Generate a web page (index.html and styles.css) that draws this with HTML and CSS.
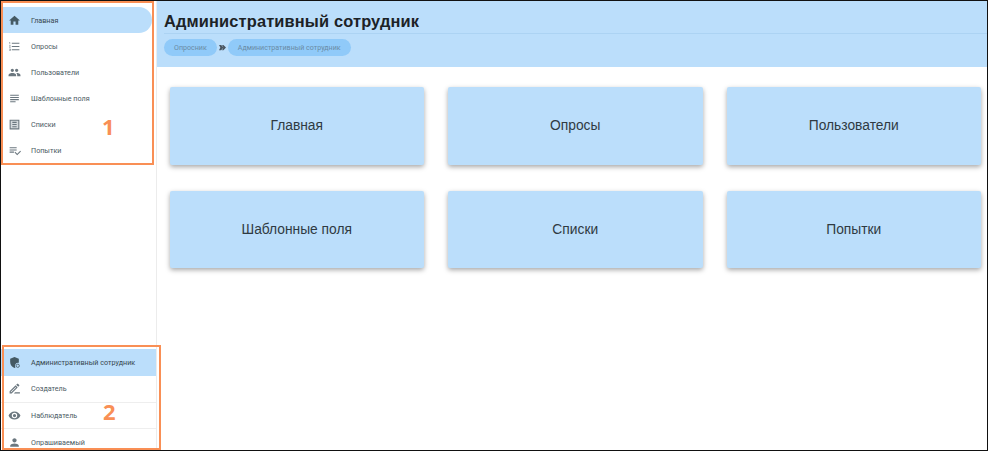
FILE: index.html
```html
<!DOCTYPE html>
<html lang="ru">
<head>
<meta charset="utf-8">
<title>Административный сотрудник</title>
<link rel="stylesheet" href="styles.css">
</head>
<body>
<div class="frame">
  <aside class="sidebar">
    <nav class="menu">
      <a class="item active"><svg class="icon" viewBox="0 0 24 24"><path d="M10 20v-6h4v6h5v-8h3L12 3 2 12h3v8z"/></svg><span>Главная</span></a>
      <a class="item"><svg class="icon" viewBox="0 0 24 24"><path d="M2 17h2v.5H3v1h1v.5H2v1h3v-4H2zm1-9h1V4H2v1h1zm-1 3h1.8L2 13.1v.9h3v-1H3.2L5 10.9V10H2zm5-6v2h14V5zm0 14h14v-2H7zm0-6h14v-2H7z"/></svg><span>Опросы</span></a>
      <a class="item"><svg class="icon" viewBox="0 0 24 24"><path d="M16 11c1.66 0 2.99-1.34 2.99-3S17.66 5 16 5s-3 1.34-3 3 1.34 3 3 3zm-8 0c1.66 0 2.99-1.34 2.99-3S9.66 5 8 5 5 6.34 5 8s1.34 3 3 3zm0 2c-2.33 0-7 1.17-7 3.5V19h14v-2.5C15 14.170 10.33 13 8 13zm8 0c-.29 0-.62.02-.97.05C16.19 13.89 17 15.02 17 16.5V19h6v-2.5c0-2.33-4.67-3.5-7-3.5z"/></svg><span>Пользователи</span></a>
      <a class="item"><svg class="icon" viewBox="0 0 24 24"><path d="M14 17H4v2h10zm6-8H4v2h16zM4 15h16v-2H4zM4 5v2h16V5z"/></svg><span>Шаблонные поля</span></a>
      <a class="item"><svg class="icon" viewBox="0 0 24 24"><path class="tint" d="M4 4h16v16H4z"/><path d="M3 3v18h18V3zm2 2h14v14H5zm3 2v2h8V7zm0 4v2h8v-2zm0 4v2h8v-2z" fill-rule="evenodd"/></svg><span>Списки</span></a>
      <a class="item"><svg class="icon" viewBox="0 0 24 24"><path d="M3 6h13v2H3zm0 4h13v2H3zm0 4h8v2H3zm19.6-1.6L17 18l-3.600-3.600-1.400 1.400 5 5 7-7z"/></svg><span>Попытки</span></a>
    </nav>
    <nav class="roles">
      <a class="role active"><svg class="icon" viewBox="0 0 24 24"><path d="M12 2 4 5v6c0 5 3.400 9.700 8 11 .6-.2 1.200-.4 1.700-.7A6 6 0 0 1 20 12.400V5z"/><circle class="ring" cx="18" cy="18" r="3"/></svg><span>Административный сотрудник</span></a>
      <a class="role"><svg class="icon" viewBox="0 0 24 24"><path d="M14.060 9.020l.92.92L5.920 19H5v-.92zM17.660 3c-.25 0-.51.1-.7.29l-1.830 1.830 3.750 3.750 1.830-1.830a1 1 0 0 0 0-1.410l-2.340-2.340c-.2-.2-.45-.29-.71-.29zm-3.600 3.190L3 17.250V21h3.750L17.810 9.940zM13 19h9v2h-11z"/></svg><span>Создатель</span></a>
      <a class="role"><svg class="icon" viewBox="0 0 24 24"><path d="M12 4.500C7 4.500 2.730 7.610 1 12c1.730 4.390 6 7.500 11 7.500s9.270-3.110 11-7.500c-1.730-4.390-6-7.500-11-7.500zM12 17a5 5 0 1 1 0-10 5 5 0 0 1 0 10zm0-8a3 3 0 1 0 0 6 3 3 0 0 0 0-6z"/></svg><span>Наблюдатель</span></a>
      <a class="role"><svg class="icon" viewBox="0 0 24 24"><path d="M12 12c2.210 0 4-1.790 4-4s-1.790-4-4-4-4 1.790-4 4 1.790 4 4 4zm0 2c-2.670 0-8 1.340-8 4v2h16v-2c0-2.660-5.330-4-8-4z"/></svg><span>Опрашиваемый</span></a>
    </nav>
  </aside>
  <main class="main">
    <header class="header">
      <h1 class="title">Административный сотрудник</h1>
      <div class="crumbs">
        <span class="chip">Опросник</span>
        <svg class="sep" viewBox="0 0 8 8"><path d="M0 1h2.500L5 4 2.500 7H0l1.500-3zM3.500 1h1.500L8 4 5 7H3.500L5 4z"/></svg>
        <span class="chip">Административный сотрудник</span>
      </div>
    </header>
    <section class="cards">
      <div class="card">Главная</div>
      <div class="card">Опросы</div>
      <div class="card">Пользователи</div>
      <div class="card">Шаблонные поля</div>
      <div class="card">Списки</div>
      <div class="card">Попытки</div>
    </section>
  </main>
  <div class="note note-one"><b>1</b></div>
  <div class="note note-two"><b>2</b></div>
</div>
</body>
</html>
```
FILE: styles.css
```css
* { box-sizing: border-box; }
html, body { margin: 0; padding: 0; background: #fff; }
body { width: 988px; height: 452px; overflow: hidden; font-family: Roboto, "Liberation Sans", sans-serif; }
.frame {
  position: relative;
  display: flex;
  width: 988px;
  height: 451px;
  border: 1px solid #111;
  overflow: hidden;
}
.sidebar {
  width: 156px;
  flex: none;
  display: flex;
  flex-direction: column;
  justify-content: space-between;
  border-right: 1px solid #ececec;
  padding-top: 6px;
  color: #4a5a63;
  font-size: 7.200px;
}
.menu { display: flex; flex-direction: column; }
.item, .role {
  display: flex;
  flex: none;
  align-items: center;
  gap: 10px;
  height: 26px;
  padding-left: 7px;
}
.item.active {
  background: #bbdefb;
  border-radius: 0 13px 13px 0;
  margin-right: 4px;
  color: #37474f;
}
.roles { display: flex; flex-direction: column; height: 101px; }
.role { border-bottom: 1px solid #eee; height: 26.500px; }
.role:last-child { border-bottom: 0; }
.role.active { background: #bbdefb; color: #37474f; height: 27px; border-bottom: 0; }
.icon { width: 13px; height: 13px; flex: none; fill: #6b777f; }
.item.active .icon, .role.active .icon { fill: #455a64; }
.tint { fill: #d5dadd; }
.ring { fill: none; stroke: #455a64; stroke-width: 1.500; }
.main { flex: 1; min-width: 0; display: flex; flex-direction: column; }
.header { height: 66px; background: #bbdefb; padding: 0 0 0 7px; }
.title {
  margin: 0;
  height: 33px;
  border-bottom: 1px solid #acd3f3;
  font-family: "Liberation Sans", Arial, sans-serif;
  font-size: 16.400px;
  font-weight: 700;
  line-height: 41px;
  color: #1c2226;
  letter-spacing: 0.150px;
}
.crumbs { display: flex; align-items: center; gap: 2px; margin-top: 5px; }
.chip {
  height: 17px;
  padding: 0 10px;
  border-radius: 9px;
  background: #90caf9;
  color: #6a8aa5;
  font-size: 7.100px;
  line-height: 17px;
}
.sep { width: 7px; height: 7px; fill: #4a5560; }
.cards {
  display: grid;
  grid-template-columns: repeat(3, 254.500px);
  grid-auto-rows: 77.500px;
  column-gap: 24px;
  row-gap: 26px;
  padding: 20px 0 0 12.500px;
}
.card {
  display: flex;
  align-items: center;
  justify-content: center;
  background: #bbdefb;
  border-radius: 2px;
  box-shadow: 0 2px 5px rgba(0, 0, 0, 0.35);
  font-family: "Liberation Sans", Arial, sans-serif;
  font-size: 13.800px;
  color: #2f3a42;
}
.note { position: absolute; border: 2px solid #f98f55; pointer-events: none; }
.note b {
  position: absolute;
  font-family: "Open Sans", sans-serif;
  font-size: 22px;
  line-height: 22px;
  font-weight: 700;
  color: #f98f55;
}
.note-one { left: 0; top: 0; width: 153px; height: 164px; }
.note-one b { left: 99px; top: 112px; }
.note-two { left: 1px; top: 344px; width: 159px; height: 105px; }
.note-two b { left: 99px; top: 53px; }
```
